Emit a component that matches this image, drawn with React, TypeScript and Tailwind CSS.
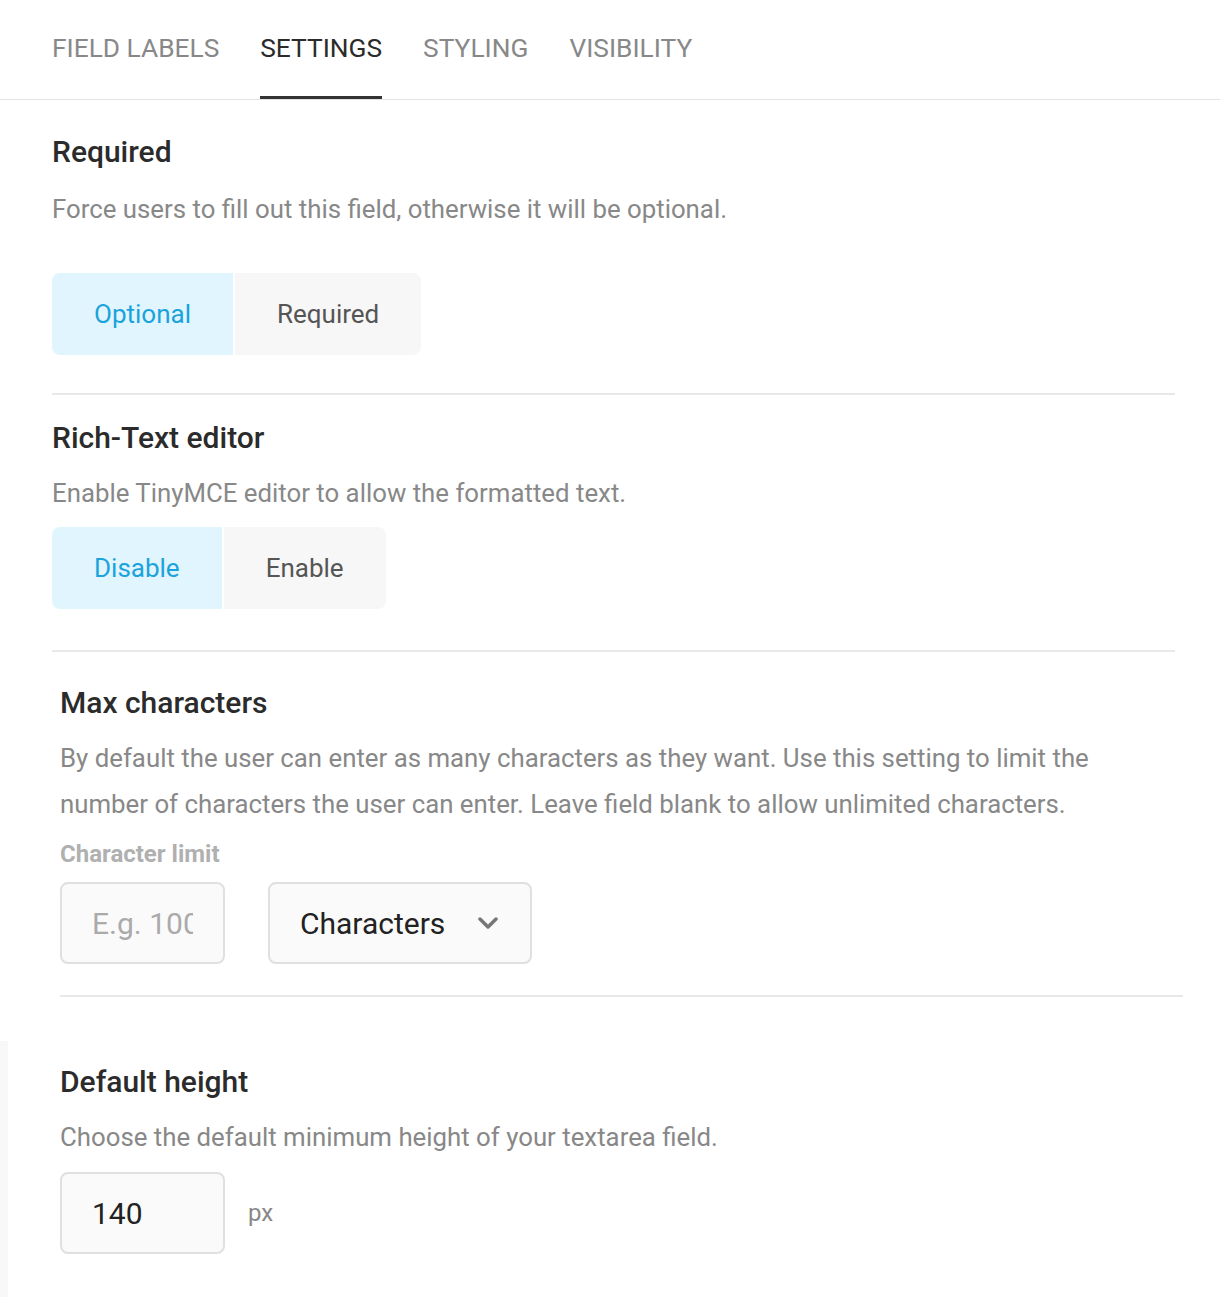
import { ReactNode } from 'react';

const tabs = ['Field labels', 'Settings', 'Styling', 'Visibility'];

function Segmented({ options, active }: { options: string[]; active: number }) {
  return (
    <div className="flex gap-[2px]">
      {options.map((opt, i) => (
        <button
          key={opt}
          className={`h-[82px] px-[42px] text-[26px] leading-none
            ${i === 0 ? 'rounded-l-[8px]' : ''}
            ${i === options.length - 1 ? 'rounded-r-[8px]' : ''}
            ${i === active ? 'bg-[#e1f5fe] text-[#1ba3dd]' : 'bg-[#f7f7f7] text-[#555555]'}`}
        >
          {opt}
        </button>
      ))}
    </div>
  );
}

function Heading({ children, className = '' }: { children: ReactNode; className?: string }) {
  return (
    <h3 className={`text-[30px] leading-[36px] font-medium text-[#2b2b2b] ${className}`}>{children}</h3>
  );
}

function Desc({ children, className = '' }: { children: ReactNode; className?: string }) {
  return <p className={`text-[25.8px] leading-[32px] text-[#888888] ${className}`}>{children}</p>;
}

const Divider = () => <div className="h-[2px] w-[1123px] bg-[#e8e8e8]" />;

export default function App() {
  return (
    <div className="w-[1220px] min-h-[1298px] bg-white font-['Roboto',sans-serif]">
      {/* tabs */}
      <div className="flex h-[100px] gap-[41px] border-b border-[#e3e3e3] px-[52px]">
        {tabs.map((t, i) => (
          <div
            key={t}
            className={`flex h-full items-center border-b-[3px] text-[26.3px] uppercase leading-none
              ${i === 1 ? 'border-[#333333] text-[#2b2b2b]' : 'border-transparent text-[#888888]'}`}
          >
            {t}
          </div>
        ))}
      </div>

      <div className="px-[52px]">
        {/* required */}
        <Heading className="mt-[34px]">Required</Heading>
        <Desc className="mt-[23px]">Force users to fill out this field, otherwise it will be optional.</Desc>
        <div className="mt-[48px]">
          <Segmented options={['Optional', 'Required']} active={0} />
        </div>
        <div className="mt-[38px]">
          <Divider />
        </div>

        {/* rich text */}
        <Heading className="mt-[25px]">Rich-Text editor</Heading>
        <Desc className="mt-[21px]">Enable TinyMCE editor to allow the formatted text.</Desc>
        <div className="mt-[18px]">
          <Segmented options={['Disable', 'Enable']} active={0} />
        </div>
        <div className="mt-[41px]">
          <Divider />
        </div>

        {/* max characters */}
        <div className="ml-[8px]">
          <Heading className="mt-[33px]">Max characters</Heading>
          <p className="mt-[14px] max-w-[1100px] text-[25.8px] leading-[46px] text-[#888888]">
            By default the user can enter as many characters as they want. Use this setting to limit the number of
            characters the user can enter. Leave field blank to allow unlimited characters.
          </p>
          <div className="mt-[13px] text-[24px] font-bold leading-[28px] text-[#b0b0b0]">Character limit</div>
          <div className="mt-[14px] flex gap-[43px]">
            <input
              placeholder="E.g. 100"
              className="h-[82px] w-[165px] rounded-[8px] border-2 border-[#e0e0e0] bg-[#fafafa] px-[30px] text-[30px] text-[#222222] outline-none placeholder:text-[#aaaaaa]"
            />
            <div className="flex h-[82px] w-[264px] items-center justify-between rounded-[8px] border-2 border-[#e0e0e0] bg-[#fafafa] pl-[30px] pr-[32px] text-[30px] text-[#222222]">
              <span>Characters</span>
              <svg width="20" height="12" viewBox="0 0 20 12" fill="none">
                <polyline points="2,2 10,10 18,2" stroke="#777777" strokeWidth="3.5" strokeLinecap="round" strokeLinejoin="round" />
              </svg>
            </div>
          </div>
          <div className="mt-[31px]">
            <Divider />
          </div>
        </div>
      </div>

      {/* default height */}
      <div className="mt-[44px] flex">
        <div className="w-[8px] self-stretch bg-[#f8f8f8]" />
        <div className="pl-[52px] pb-[43px]">
          <Heading className="mt-[23px]">Default height</Heading>
          <Desc className="mt-[21px]">Choose the default minimum height of your textarea field.</Desc>
          <div className="mt-[19px] flex items-center gap-[23px]">
            <input
              defaultValue="140"
              className="h-[82px] w-[165px] rounded-[8px] border-2 border-[#e0e0e0] bg-[#fafafa] px-[30px] text-[30px] text-[#222222] outline-none"
            />
            <span className="text-[24px] text-[#888888]">px</span>
          </div>
        </div>
      </div>
    </div>
  );
}
